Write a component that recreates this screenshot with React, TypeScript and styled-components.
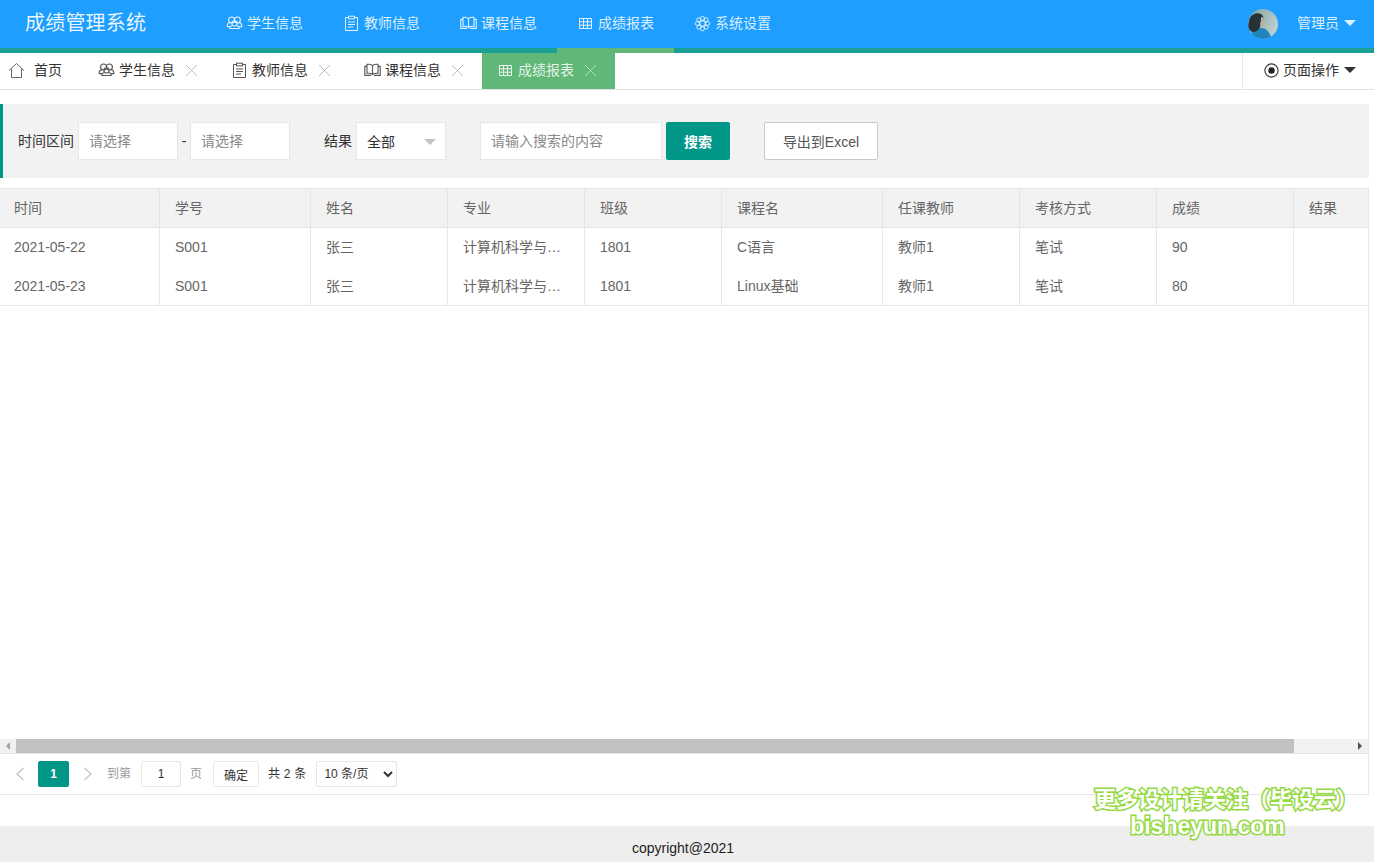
import React from 'react'
import styled, { createGlobalStyle } from 'styled-components'

const GlobalStyle = createGlobalStyle`
  html, body {
    margin: 0;
    padding: 0;
    background: #fff;
  }
  body {
    font: 14px/1.5 'Liberation Sans', 'Noto Sans CJK SC', sans-serif;
    color: #333;
  }
  * {
    box-sizing: border-box;
  }
`

const SPage = styled.div`
  position: relative;
  width: 1374px;
  height: 862px;
  overflow: hidden;
  display: flex;
  flex-direction: column;
`

const SHeader = styled.header`
  height: 53px;
  flex: none;
  display: flex;
  background: #1e9fff;
  border-bottom: 5px solid #1aa094;
`

const SLogo = styled.div`
  width: 206px;
  padding-left: 25px;
  font-size: 20px;
  line-height: 46px;
  letter-spacing: 0.2px;
  color: rgba(255, 255, 255, 0.92);
`

const SNav = styled.nav`
  display: flex;
  flex: 1;
`

const SNavItem = styled.div<{ $active?: boolean }>`
  width: 117px;
  height: 53px;
  padding-left: 20px;
  display: flex;
  align-items: flex-start;
  gap: 4px;
  line-height: 46px;
  color: rgba(255, 255, 255, 0.85);
  border-bottom: 5px solid ${(p) => (p.$active ? '#5fb878' : 'transparent')};

  svg {
    margin-top: 15px;
  }
`

const SUser = styled.div`
  display: flex;
  align-items: flex-start;
  padding: 9px 18px 0 0;
  color: rgba(255, 255, 255, 0.85);
`

const SUserName = styled.span`
  margin-left: 19px;
  line-height: 28px;
`

const SCaret = styled.i<{ $color: string }>`
  display: block;
  width: 0;
  height: 0;
  margin-left: 5px;
  border-style: solid;
  border-width: 6px 6px 0;
  border-color: ${(p) => p.$color} transparent transparent;
`

const SUserCaret = styled(SCaret)`
  margin-top: 11px;
`

const STabBar = styled.div`
  height: 37px;
  flex: none;
  display: flex;
  background: #fff;
  border-bottom: 1px solid #e2e2e2;
`

const SHomeTab = styled.div`
  width: 83px;
  height: 36px;
  padding: 0 0 2px 8px;
  display: flex;
  align-items: center;
  gap: 9px;
  color: #333;
`

const STab = styled.div<{ $active?: boolean }>`
  width: 133px;
  height: 36px;
  padding: 0 0 2px 15px;
  display: flex;
  align-items: center;
  gap: 4px;
  background: ${(p) => (p.$active ? '#5fb878' : 'transparent')};
  color: ${(p) => (p.$active ? 'rgba(255, 255, 255, 0.85)' : '#333')};
`

const STabClose = styled.span`
  margin-left: 6px;
  display: flex;
  opacity: 0.55;
`

const SPageOps = styled.div`
  margin-left: auto;
  width: 132px;
  height: 36px;
  padding: 0 0 2px 21px;
  display: flex;
  align-items: center;
  border-left: 1px solid #e8e8e8;
  color: #333;
`

const SPageOpsLabel = styled.span`
  margin-left: 4px;
`

const SContent = styled.main`
  padding: 14px 5px 0 0;
  flex: none;
`

const SFilter = styled.div`
  height: 74px;
  display: flex;
  align-items: center;
  padding: 0 0 0 15px;
  background: #f2f2f2;
  border-left: 3px solid #009688;
  color: #333;
`

const SFieldLabel = styled.label`
  margin-right: 4px;
`

const SInput = styled.input<{ $width: number }>`
  width: ${(p) => p.$width}px;
  height: 38px;
  padding: 0 10px;
  border: 1px solid #e6e6e6;
  background: #fff;
  font: inherit;
  outline: none;

  &::placeholder {
    color: #8a8a8a;
    opacity: 1;
  }
`

const SDash = styled.span`
  width: 12px;
  text-align: center;
`

const SFakeSelect = styled.div`
  width: 90px;
  height: 38px;
  padding: 2px 0 0 10px;
  margin-right: 34px;
  display: flex;
  align-items: center;
  justify-content: space-between;
  border: 1px solid #e6e6e6;
  background: #fff;
`

const SSelectCaret = styled(SCaret)`
  margin: 0 9px 0 0;
`

const SFilterGroup = styled.div`
  display: flex;
  align-items: center;
  margin-left: 34px;
`

const SPrimaryButton = styled.button`
  width: 64px;
  height: 38px;
  margin: 0 34px 0 4px;
  border: 0;
  border-radius: 2px;
  background: #009688;
  color: #fff;
  font: 700 14px 'Liberation Sans', 'Noto Sans CJK SC', sans-serif;
`

const SOutlineButton = styled.button`
  width: 114px;
  height: 38px;
  border: 1px solid #c9c9c9;
  border-radius: 2px;
  background: #fff;
  color: #555;
  font: 14px 'Liberation Sans', 'Noto Sans CJK SC', sans-serif;
`

const STableBox = styled.section`
  margin-top: 10px;
  height: 607px;
  display: flex;
  flex-direction: column;
  border: 1px solid #e6e6e6;
  border-left: 0;
`

const STableScroll = styled.div`
  flex: 1;
  overflow: hidden;
`

const STable = styled.table`
  width: 1430px;
  table-layout: fixed;
  border-collapse: separate;
  border-spacing: 0;
  color: #666;
`

const STh = styled.th`
  height: 39px;
  padding: 0 15px;
  font-weight: 400;
  text-align: left;
  background: #f2f2f2;
  border-right: 1px solid #e6e6e6;
  border-bottom: 1px solid #e6e6e6;

  &:first-child {
    padding-left: 14px;
  }
`

const STd = styled.td`
  height: 39px;
  padding: 0 15px;
  white-space: nowrap;
  overflow: hidden;
  text-overflow: ellipsis;
  border-right: 1px solid #e6e6e6;

  &:first-child {
    padding-left: 14px;
  }
`

const SLastRow = styled.tr`
  td {
    height: 39px;
    border-bottom: 1px solid #e6e6e6;
  }
`

const SScrollbar = styled.div`
  height: 15px;
  flex: none;
  display: flex;
  align-items: center;
  background: #f1f1f1;
  border-bottom: 1px solid #e6e6e6;
`

const SScrollArrow = styled.div`
  width: 16px;
  height: 14px;
  flex: none;
  display: flex;
  align-items: center;
  justify-content: center;
`

const SArrowLeft = styled.i`
  border-style: solid;
  border-width: 4px 4px 4px 0;
  border-color: transparent #a3a3a3 transparent transparent;
`

const SArrowRight = styled.i`
  border-style: solid;
  border-width: 4px 0 4px 4px;
  border-color: transparent transparent transparent #505050;
`

const SScrollTrack = styled.div`
  flex: 1;
  height: 14px;
`

const SScrollThumb = styled.div`
  height: 100%;
  background: #c1c1c1;
`

const SPager = styled.div`
  height: 40px;
  flex: none;
  display: flex;
  align-items: center;
  padding-left: 15px;
  font-size: 12px;
  color: #999;
`

const SPagerChevron = styled.span`
  display: flex;
  width: 23px;
`

const SPagerNext = styled(SPagerChevron)`
  width: 24px;
  margin-left: 14px;
`

const SPagerCurrent = styled.span`
  width: 31px;
  height: 26px;
  border-radius: 2px;
  background: #009688;
  color: #fff;
  font-weight: 700;
  font-size: 12px;
  line-height: 26px;
  text-align: center;
`

const SPagerInput = styled.input`
  width: 40px;
  height: 26px;
  margin: 0 9px 0 10px;
  border: 1px solid #e6e6e6;
  border-radius: 2px;
  text-align: center;
  color: #333;
  font: 12px 'Liberation Sans', sans-serif;
`

const SPagerConfirm = styled.button`
  width: 46px;
  height: 26px;
  margin: 0 9px 0 11px;
  padding: 0;
  border: 1px solid #e6e6e6;
  border-radius: 2px;
  background: #fff;
  color: #333;
  font: 12px 'Liberation Sans', 'Noto Sans CJK SC', sans-serif;
`

const SPagerTotal = styled.span`
  color: #333;
  margin-right: 10px;
  letter-spacing: 0.2px;
`

const SPagerSelect = styled.select`
  width: 81px;
  height: 26px;
  padding: 0 0 0 3px;
  border: 1px solid #e6e6e6;
  border-radius: 2px;
  background: #fff;
  color: #333;
  font: 12px 'Liberation Sans', 'Noto Sans CJK SC', sans-serif;
`

const SFooter = styled.footer`
  margin-top: auto;
  height: 36px;
  flex: none;
  padding-right: 8px;
  background: #eee;
  text-align: center;
  line-height: 44px;
  color: #222;
`

const SWatermark = styled.div`
  position: absolute;
  left: 1064px;
  top: 786px;
  width: 310px;
  text-align: center;
  font-weight: 700;
  color: #fff;
  -webkit-text-stroke: 3px #93d93f;
  paint-order: stroke fill;
  pointer-events: none;
`

const SWatermarkTitle = styled.div`
  font-size: 22px;
  line-height: 28px;
  margin-left: 14px;
  white-space: nowrap;
`

const SWatermarkSite = styled.div`
  font-size: 23px;
  line-height: 25px;
  margin-right: 23px;
`

type IconProps = { size?: number; color?: string }

function UsersIcon({ size = 17, color = 'currentColor' }: IconProps) {
  return (
    <svg width={size} height={size} viewBox="0 0 17 17" fill="none" stroke={color} strokeWidth="1.1">
      <circle cx="5.6" cy="5" r="3" />
      <circle cx="11.4" cy="5" r="3" />
      <circle cx="8.5" cy="8.4" r="2.6" />
      <path d="M3.8 7.6C1.8 8.2 1 9.8 1.2 11.6h2.7M13.2 7.6c2 .6 2.8 2.2 2.6 4h-2.7" />
      <path d="M5.8 10.6c-1.4.6-2 1.6-2 2.9h9.4c0-1.3-.6-2.3-2-2.9" />
    </svg>
  )
}

function ClipboardIcon({ size = 17, color = 'currentColor' }: IconProps) {
  return (
    <svg width={size} height={size} viewBox="0 0 17 17" fill="none" stroke={color} strokeWidth="1">
      <path d="M5.5 2.5H2.5v13h12v-13h-3" />
      <rect x="5.5" y="1.2" width="6" height="2.6" />
      <path d="M5 7h7M5 9.5h7M5 12h5" />
    </svg>
  )
}

function BookIcon({ size = 17, color = 'currentColor' }: IconProps) {
  return (
    <svg width={size} height={size} viewBox="0 0 17 17" fill="none" stroke={color} strokeWidth="1.1">
      <path d="M8.5 3.6C7.2 2.4 5.2 2.1 3 2.4v8.9c2.2-.3 4.2 0 5.5 1.2c1.3-1.2 3.3-1.5 5.5-1.2V2.4c-2.2-.3-4.2 0-5.5 1.2zM8.5 3.6v8.9" />
      <path d="M3 4.4H.8v9h6.2M14 4.4h2.2v9H10" />
    </svg>
  )
}

function GridIcon({ size = 17, color = 'currentColor' }: IconProps) {
  return (
    <svg width={size} height={size} viewBox="0 0 17 17" fill="none" stroke={color} strokeWidth="1">
      <path d="M2.5 3.5h12v10h-12zM2.5 6.8h12M2.5 10.2h12M6.5 3.5v10M10.5 3.5v10" />
    </svg>
  )
}

function GearIcon({ size = 17, color = 'currentColor' }: IconProps) {
  const petals = [0, 45, 90, 135, 180, 225, 270, 315]
  return (
    <svg width={size} height={size} viewBox="0 0 17 17" fill="none" stroke={color} strokeWidth="1">
      <circle cx="8.5" cy="8.5" r="2.8" />
      {petals.map((deg) => (
        <ellipse key={deg} cx="8.5" cy="3.4" rx="1.9" ry="2.2" strokeWidth="0.9" transform={`rotate(${deg} 8.5 8.5)`} />
      ))}
    </svg>
  )
}

function HomeIcon() {
  return (
    <svg width="17" height="17" viewBox="0 0 17 17" fill="none" stroke="#666" strokeWidth="1">
      <path d="M1 8.5L8.5 1.5L16 8.5M3.5 7V15.5H13.5V7" />
    </svg>
  )
}

function CloseIcon({ color = '#888' }: IconProps) {
  return (
    <svg width="13" height="13" viewBox="0 0 13 13" fill="none" stroke={color} strokeWidth="1">
      <path d="M1 1L12 12M12 1L1 12" />
    </svg>
  )
}

function RadioIcon() {
  return (
    <svg width="15" height="15" viewBox="0 0 15 15">
      <circle cx="7.5" cy="7.5" r="6.6" fill="none" stroke="#333" strokeWidth="1.1" />
      <circle cx="7.5" cy="7.5" r="3.2" fill="#222" />
    </svg>
  )
}

function Chevron({ dir }: { dir: 'left' | 'right' }) {
  return (
    <svg width="10" height="14" viewBox="0 0 10 14" fill="none" stroke="#c2c2c2" strokeWidth="1.2">
      <path d={dir === 'left' ? 'M8.5 1L2 7L8.5 13' : 'M1.5 1L8 7L1.5 13'} />
    </svg>
  )
}

function Avatar() {
  return (
    <svg width="30" height="30" viewBox="0 0 30 30">
      <defs>
        <clipPath id="avatarClip">
          <circle cx="15" cy="15" r="15" />
        </clipPath>
        <linearGradient id="avatarBg" x1="0" y1="0" x2="1" y2="0.5">
          <stop offset="0" stopColor="#7f9ea0" />
          <stop offset="1" stopColor="#bccfcc" />
        </linearGradient>
      </defs>
      <g clipPath="url(#avatarClip)">
        <rect width="30" height="30" fill="url(#avatarBg)" />
        <path d="M2 30C2 23 8 19 13 19c5 0 8 3 11 11z" fill="#1f86bd" />
        <path d="M1 12C2 5 9 3 13 5c3 2 3 6 2 9l-3 3c0 3-2 5-6 6c-3 0-5-2-6-5z" fill="#24333a" />
        <path d="M13 8c2 0 4 2 4 5c0 2-1 3-3 3.500c-1 .2-2-.5-2-1.500c1-2 1-5 1-7z" fill="#b9aea4" />
      </g>
    </svg>
  )
}

const NAV_ITEMS = [
  { label: '学生信息', Icon: UsersIcon },
  { label: '教师信息', Icon: ClipboardIcon },
  { label: '课程信息', Icon: BookIcon },
  { label: '成绩报表', Icon: GridIcon, active: true },
  { label: '系统设置', Icon: GearIcon },
]

const TABS = [
  { label: '学生信息', Icon: UsersIcon },
  { label: '教师信息', Icon: ClipboardIcon },
  { label: '课程信息', Icon: BookIcon },
  { label: '成绩报表', Icon: GridIcon, active: true },
]

const COLUMNS = [
  { title: '时间', width: 160 },
  { title: '学号', width: 151 },
  { title: '姓名', width: 137 },
  { title: '专业', width: 137 },
  { title: '班级', width: 137 },
  { title: '课程名', width: 161 },
  { title: '任课教师', width: 137 },
  { title: '考核方式', width: 137 },
  { title: '成绩', width: 137 },
  { title: '结果', width: 137 },
]

const ROWS = [
  ['2021-05-22', 'S001', '张三', '计算机科学与技术', '1801', 'C语言', '教师1', '笔试', '90', ''],
  ['2021-05-23', 'S001', '张三', '计算机科学与技术', '1801', 'Linux基础', '教师1', '笔试', '80', ''],
]

export default function App(): React.ReactElement {
  return (
    <SPage>
      <GlobalStyle />
      <SHeader>
        <SLogo>成绩管理系统</SLogo>
        <SNav>
          {NAV_ITEMS.map(({ label, Icon, active }) => (
            <SNavItem key={label} $active={active}>
              <Icon />
              {label}
            </SNavItem>
          ))}
        </SNav>
        <SUser>
          <Avatar />
          <SUserName>管理员</SUserName>
          <SUserCaret $color="rgba(255,255,255,0.85)" />
        </SUser>
      </SHeader>

      <STabBar>
        <SHomeTab>
          <HomeIcon />
          首页
        </SHomeTab>
        {TABS.map(({ label, Icon, active }) => (
          <STab key={label} $active={active}>
            <Icon color={active ? '#e8f5ec' : '#555'} />
            {label}
            <STabClose>
              <CloseIcon color={active ? '#fff' : '#888'} />
            </STabClose>
          </STab>
        ))}
        <SPageOps>
          <RadioIcon />
          <SPageOpsLabel>页面操作</SPageOpsLabel>
          <SCaret $color="#333" />
        </SPageOps>
      </STabBar>

      <SContent>
        <SFilter>
          <SFieldLabel>时间区间</SFieldLabel>
          <SInput $width={100} placeholder="请选择" />
          <SDash>-</SDash>
          <SInput $width={100} placeholder="请选择" />
          <SFilterGroup>
            <SFieldLabel>结果</SFieldLabel>
            <SFakeSelect>
              全部
              <SSelectCaret $color="#c2c2c2" />
            </SFakeSelect>
          </SFilterGroup>
          <SInput $width={182} placeholder="请输入搜索的内容" />
          <SPrimaryButton>搜索</SPrimaryButton>
          <SOutlineButton>导出到Excel</SOutlineButton>
        </SFilter>

        <STableBox>
          <STableScroll>
            <STable>
              <colgroup>
                {COLUMNS.map((col) => (
                  <col key={col.title} width={col.width} />
                ))}
              </colgroup>
              <thead>
                <tr>
                  {COLUMNS.map((col) => (
                    <STh key={col.title}>{col.title}</STh>
                  ))}
                </tr>
              </thead>
              <tbody>
                <tr>
                  {ROWS[0].map((cell, i) => (
                    <STd key={i}>{cell}</STd>
                  ))}
                </tr>
                <SLastRow>
                  {ROWS[1].map((cell, i) => (
                    <STd key={i}>{cell}</STd>
                  ))}
                </SLastRow>
              </tbody>
            </STable>
          </STableScroll>
          <SScrollbar>
            <SScrollArrow>
              <SArrowLeft />
            </SScrollArrow>
            <SScrollTrack>
              <SScrollThumb style={{ width: `${(1278 / 1336) * 100}%` }} />
            </SScrollTrack>
            <SScrollArrow>
              <SArrowRight />
            </SScrollArrow>
          </SScrollbar>
          <SPager>
            <SPagerChevron>
              <Chevron dir="left" />
            </SPagerChevron>
            <SPagerCurrent>1</SPagerCurrent>
            <SPagerNext>
              <Chevron dir="right" />
            </SPagerNext>
            到第
            <SPagerInput defaultValue="1" />
            页
            <SPagerConfirm>确定</SPagerConfirm>
            <SPagerTotal>共 2 条</SPagerTotal>
            <SPagerSelect defaultValue="10">
              <option value="10">10 条/页</option>
              <option value="20">20 条/页</option>
            </SPagerSelect>
          </SPager>
        </STableBox>
      </SContent>

      <SFooter>copyright@2021</SFooter>

      <SWatermark>
        <SWatermarkTitle>更多设计请关注（毕设云）</SWatermarkTitle>
        <SWatermarkSite>bisheyun.com</SWatermarkSite>
      </SWatermark>
    </SPage>
  )
}
